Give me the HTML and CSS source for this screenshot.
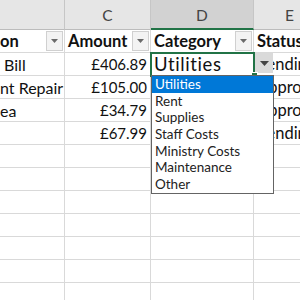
FILE: index.html
```html
<!DOCTYPE html>
<html>
  <head>
    <meta charset="UTF-8">
    <title>Expenses</title>
    <link rel="stylesheet" href="styles.css">
  </head>
  <body>
    <div class="sheet">
      <div class="col-head"></div>
      <div class="col-head">C</div>
      <div class="col-head active">D</div>
      <div class="col-head">E</div>

      <div class="cell head first"><span class="txt">on</span><span class="filter"><svg width="7" height="4" viewBox="0 0 7 4"><path d="M0 0h7L3.5 4z" fill="#6a6a6a"/></svg></span></div>
      <div class="cell head"><span class="txt">Amount</span><span class="filter"><svg width="7" height="4" viewBox="0 0 7 4"><path d="M0 0h7L3.5 4z" fill="#6a6a6a"/></svg></span></div>
      <div class="cell head"><span class="txt">Category</span><span class="filter"><svg width="7" height="4" viewBox="0 0 7 4"><path d="M0 0h7L3.5 4z" fill="#6a6a6a"/></svg></span></div>
      <div class="cell head"><span class="txt">Status</span></div>

      <div class="cell first">&nbsp;Bill</div>
      <div class="cell num">£406.89</div>
      <div class="cell selected">Utilities
        <span class="drop"><svg width="9" height="5" viewBox="0 0 9 5"><path d="M0 0h9L4.5 5z" fill="#444"/></svg></span>
        <span class="handle"></span>
        <ul class="list">
          <li class="on">Utilities</li>
          <li>Rent</li>
          <li>Supplies</li>
          <li>Staff Costs</li>
          <li>Ministry Costs</li>
          <li>Maintenance</li>
          <li>Other</li>
        </ul>
      </div>
      <div class="cell">Pending</div>

      <div class="cell first">nt Repair</div>
      <div class="cell num">£105.00</div>
      <div class="cell"></div>
      <div class="cell">Approved</div>

      <div class="cell first">ea</div>
      <div class="cell num">£34.79</div>
      <div class="cell"></div>
      <div class="cell">Approved</div>

      <div class="cell first"></div>
      <div class="cell num">£67.99</div>
      <div class="cell"></div>
      <div class="cell">Pending</div>

      <div class="cell"></div><div class="cell"></div><div class="cell"></div><div class="cell"></div>
      <div class="cell"></div><div class="cell"></div><div class="cell"></div><div class="cell"></div>
      <div class="cell"></div><div class="cell"></div><div class="cell"></div><div class="cell"></div>
      <div class="cell"></div><div class="cell"></div><div class="cell"></div><div class="cell"></div>
      <div class="cell"></div><div class="cell"></div><div class="cell"></div><div class="cell"></div>
      <div class="cell"></div><div class="cell"></div><div class="cell"></div><div class="cell"></div>
      <div class="cell"></div><div class="cell"></div><div class="cell"></div><div class="cell"></div>
      <div class="cell"></div><div class="cell"></div><div class="cell"></div><div class="cell"></div>
    </div>
  </body>
</html>
```

FILE: styles.css
```css
body {
  margin: 0;
  background: #fff;
  overflow: hidden;
  font-family: Lato, "Liberation Sans", sans-serif;
  color: #111;
}

.sheet {
  display: grid;
  grid-template-columns: 65px 86px 103px 72px;
  grid-template-rows: 30px;
  grid-auto-rows: 23px;
}

.col-head {
  box-sizing: border-box;
  background: #e6e6e6;
  border-right: 1px solid #c6c6c6;
  border-bottom: 1px solid #bcbcbc;
  color: #444;
  font-size: 15.5px;
  display: flex;
  align-items: center;
  justify-content: center;
  padding-top: 1px;
}

.col-head.active {
  background: #d2d2d2;
  border-bottom: 2px solid #217346;
}

.cell {
  box-sizing: border-box;
  border-right: 1px solid #d9d9d9;
  border-bottom: 1px solid #d9d9d9;
  font-size: 16.5px;
  padding: 0 3px;
  display: flex;
  align-items: center;
  white-space: nowrap;
  overflow: hidden;
}

.cell.first {
  padding-left: 0;
  font-size: 16px;
}

.cell.num {
  justify-content: flex-end;
  font-size: 15px;
}

.cell.head {
  font-weight: bold;
  font-size: 16.5px;
  padding-right: 1px;
}

.cell.head .txt {
  flex: 1;
}

.filter {
  box-sizing: border-box;
  width: 17px;
  height: 20px;
  background: #f3f3f3;
  border: 1px solid #d0d0d0;
  display: flex;
  align-items: center;
  justify-content: center;
}

.cell.selected {
  position: relative;
  overflow: visible;
  z-index: 2;
  outline: 2px solid #217346;
  outline-offset: -1px;
  background: #fff;
  font-size: 18.5px;
  letter-spacing: 0.6px;
}

.drop {
  position: absolute;
  left: 104px;
  top: 0;
  width: 18px;
  height: 20px;
  background: #dadada;
  display: flex;
  align-items: center;
  justify-content: center;
}

.handle {
  position: absolute;
  left: 100px;
  top: 19px;
  width: 5px;
  height: 5px;
  background: #217346;
  border: 1px solid #fff;
}

.list {
  position: absolute;
  left: 0;
  top: 22px;
  width: 123px;
  margin: 0;
  padding: 0;
  list-style: none;
  box-sizing: border-box;
  background: #fff;
  border: 1px solid #646464;
  font-size: 13.5px;
  letter-spacing: 0;
}

.list li {
  height: 16.7px;
  line-height: 16.7px;
  padding-left: 3px;
  color: #222;
}

.list li.on {
  background: #0078d7;
  color: #fff;
}
```
